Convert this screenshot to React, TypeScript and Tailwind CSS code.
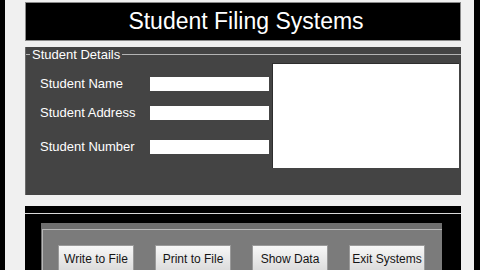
import React from "react";

// Old WinForms-style "Student Filing Systems" window.
const font = "font-['Liberation_Sans',Arial,sans-serif]";

const rows = [
  { label: "Student Name", mt: "mt-[15px]" },
  { label: "Student Address", mt: "mt-[15px]" },
  { label: "Student Number", mt: "mt-[20px]" },
];

const buttons = ["Write to File", "Print to File", "Show Data", "Exit Systems"];

export default function App() {
  return (
    <div className={`flex h-[270px] w-[480px] overflow-hidden bg-[#f0f0f0] ${font}`}>
      <div className="w-[5px] shrink-0 bg-black" />
      <div className="flex w-[436px] shrink-0 flex-col ml-[20px]">
        {/* title bar */}
        <div className="mt-[2px] flex h-[39px] shrink-0 items-center justify-center border border-[#8a8a8a] bg-black pl-[6px] text-[23px] leading-none text-white">
          Student Filing Systems
        </div>

        {/* details group */}
        <div className="mt-[6px] h-[148px] shrink-0 border-l border-[#6a6a6a] bg-[#444444]">
          <fieldset className="h-full border-t border-[#b4b4b4] pl-0 ml-0">
            <legend className="ml-[4px] px-[2px] text-[13px] leading-[15px] text-white">
              Student Details
            </legend>
            <div className="flex">
              <div className="w-[246px] pl-[14px]">
                {rows.map((r) => (
                  <div key={r.label} className={`flex h-[14px] items-center ${r.mt}`}>
                    <span className="w-[110px] text-[13px] text-white">{r.label}</span>
                    <div className="h-[14px] w-[119px] bg-white" />
                  </div>
                ))}
              </div>
              <div className="mt-[1px] h-[105px] w-[187px] border-t border-l border-[#2e2e2e] bg-white" />
            </div>
          </fieldset>
        </div>

        {/* button area */}
        <div className="mt-[11px] min-h-0 flex-1 overflow-hidden bg-black pt-[7px]">
          <div className="h-px bg-[#d8d8d8]" />
          <div className="mt-[9px] ml-[16px] mr-[19px] h-[60px] bg-[#6f6f6f] pt-[6px] pl-[1px]">
            <div className="h-full border-t border-l border-[#b8b8b8] bg-[#7b7b7b] pl-[15px] pt-[15px]">
              <div className="flex gap-[21px]">
                {buttons.map((b) => (
                  <div
                    key={b}
                    className="flex h-[28px] w-[76px] shrink-0 items-center justify-center border border-[#9a9a9a] bg-gradient-to-b from-[#f7f7f7] to-[#dadada] text-[12px] text-[#141414]"
                  >
                    {b}
                  </div>
                ))}
              </div>
            </div>
          </div>
        </div>
      </div>
      <div className="ml-[13px] flex-1 bg-[#f0f0f0]" />
      <div className="w-[6px] shrink-0 bg-black" />
    </div>
  );
}
